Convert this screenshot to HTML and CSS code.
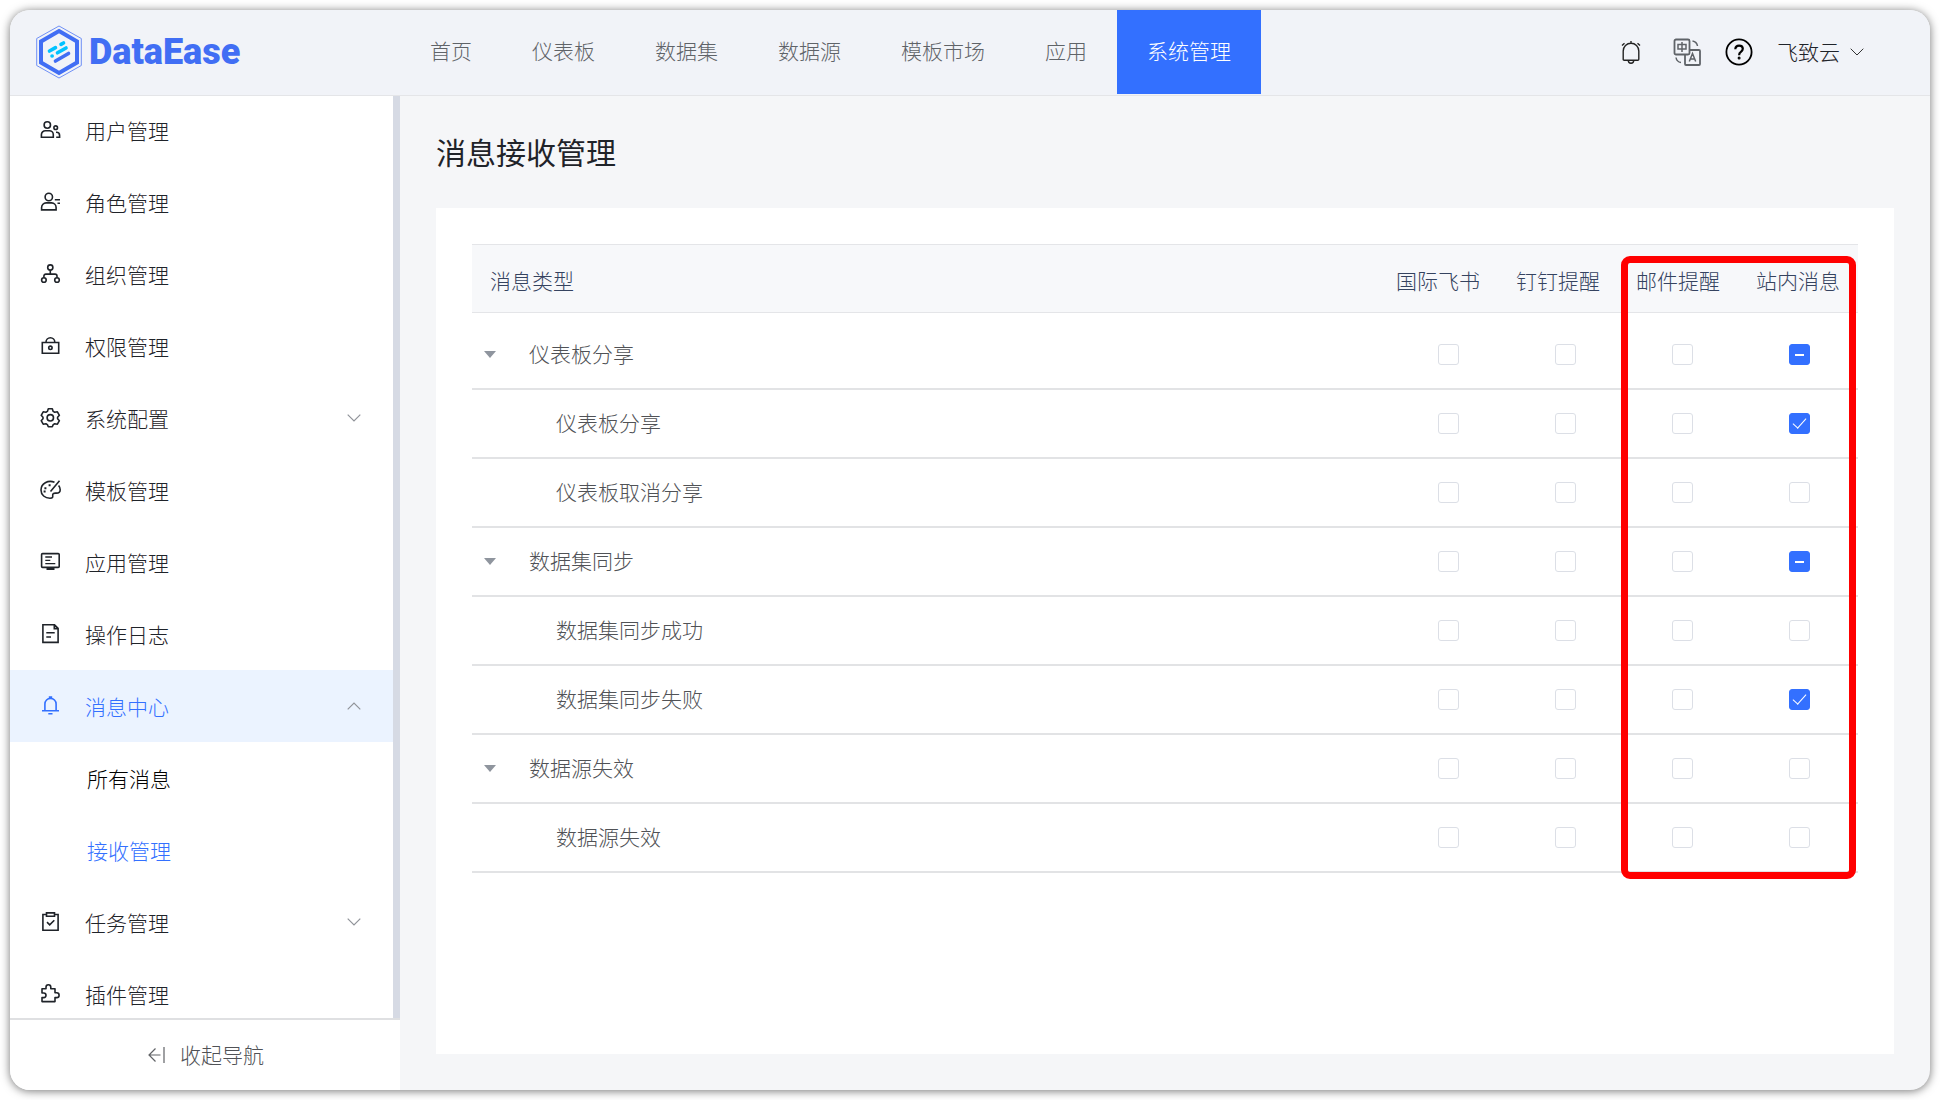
FILE: index.html
```html
<!DOCTYPE html>
<html lang="zh">
<head>
  <meta charset="UTF-8">
  <meta name="viewport" content="width=device-width, initial-scale=1.0">
  <title>DataEase</title>
  <link rel="stylesheet" href="styles.css">
</head>
<body>
  <div class="app">
    <header class="header">
      <a class="logo" href="#">
        <svg width="46" height="54" viewBox="0 0 46 54" fill="none">
          <path d="M23 1 45.300 13.500v27L23 53 .7 40.500v-27z" stroke="#6f8ff5" stroke-width="1"/>
          <path d="M23 6 41 16.400v21.200L23 48 5 37.600V16.400z" stroke="#416ef4" stroke-width="4"/>
          <g stroke-linecap="round" stroke-width="3.600">
            <path d="m13.500 26 6-3.400M25 19.400l2.500-1.400M21.500 27.800l8.500-4.800M16 31h.2" stroke="#00c2ff"/>
            <path d="m19.500 36 13-7.500" stroke="#416ef4"/>
          </g>
        </svg>
        <span class="logo-text">DataEase</span>
      </a>
      <nav class="top-nav">
        <a href="#">首页</a>
        <a href="#">仪表板</a>
        <a href="#">数据集</a>
        <a href="#">数据源</a>
        <a href="#">模板市场</a>
        <a href="#">应用</a>
        <a href="#" class="active">系统管理</a>
      </nav>
      <div class="tools">
        <button class="tool-btn notice" aria-label="消息">
          <svg width="20" height="24" viewBox="0 0 20 24" fill="none" stroke="#222" stroke-width="1.400">
            <path d="M2.200 19.200V11a7.800 7.800 0 0 1 15.600 0v8.200q0 1-1 1H3.200q-1 0-1-1zM7.300 20.500a2.700 2.700 0 0 0 5.400 0M10 1v2.500M1 5.500l2.500-2.200M19 5.500l-2.500-2.200"/>
          </svg>
        </button>
        <button class="tool-btn lang" aria-label="语言">
          <svg width="28" height="28" viewBox="0 0 28 28" fill="none" stroke="#5f6368" stroke-width="1.800">
            <rect x="1.500" y="1.500" width="15" height="15" rx="1.500"/>
            <path d="M16.500 12h9.500a1 1 0 0 1 1 1v13a1 1 0 0 1-1 1H13a1 1 0 0 1-1-1v-9.500"/>
            <path d="M5 6.500h8v4.500H5zM9 4v10M16.300 23.500 19.500 15.500l3.200 8M17.300 21h4.400M19.500 3a6 6 0 0 1 5 5M3 19.500a6 6 0 0 0 5 5" stroke-width="1.500"/>
          </svg>
        </button>
        <button class="tool-btn help" aria-label="帮助">
          <svg width="28" height="28" viewBox="0 0 28 28" fill="none" stroke="#000" stroke-width="1.800">
            <circle cx="14" cy="14" r="12.600"/>
            <path d="M10.300 11.200q.2-3.600 3.800-3.600 3.700 0 3.700 3.200 0 1.700-1.900 3-1.800 1.200-1.800 3.400" stroke-width="2.200"/>
            <circle cx="14.100" cy="20" r=".6"/>
          </svg>
        </button>
        <button class="user">
          <span class="label">飞致云</span>
          <svg width="14" height="8" viewBox="0 0 14 8" fill="none" stroke="#333" stroke-width="1"><path d="m.7.700 6.300 6.300L13.300.7"/></svg>
        </button>
      </div>
    </header>

    <div class="body">
      <aside class="sidebar">
        <nav class="menu">
          <ul>
            <li><a href="#">
              <svg class="icon" viewBox="0 0 22 22"><circle cx="8.300" cy="6" r="3.200"/><path d="M2.400 18.300v-2.600a4 4 0 0 1 4-4h3.900a4 4 0 0 1 4 4v2.600z"/><circle cx="16.700" cy="8.700" r="1.800"/><path d="M17 13.200h.4a3.200 3.200 0 0 1 3.200 3.200v1.900h-3.400"/></svg>
              用户管理</a></li>
            <li><a href="#">
              <svg class="icon" viewBox="0 0 22 22"><circle cx="9.800" cy="6" r="3.700"/><path d="M2.600 18.900v-2.500a4.500 4.500 0 0 1 4.500-4.500h5.500a4.500 4.500 0 0 1 4.500 4.500v2.500zM15.800 8.700H21M18.500 12.200H21"/></svg>
              角色管理</a></li>
            <li><a href="#">
              <svg class="icon" viewBox="0 0 22 22"><circle cx="11.300" cy="4.500" r="2.600"/><circle cx="4.900" cy="17" r="2.300"/><circle cx="18" cy="17" r="2.300"/><path d="M11.300 7.200v4M4.900 14.600v-1.500a2 2 0 0 1 2-2H16a2 2 0 0 1 2 2v1.500"/></svg>
              组织管理</a></li>
            <li><a href="#">
              <svg class="icon" viewBox="0 0 22 22"><path d="M3.300 7.500h16.400v10.700H3.300zM7 7.200a4.400 4.400 0 0 1 8.800 0"/><circle cx="11.400" cy="12.800" r="1.700"/></svg>
              权限管理</a></li>
            <li><a href="#">
              <svg class="icon" viewBox="0 0 22 22"><path d="M9.300 1.800h4l.9 2.600 1.500.9 2.700-.5 2 3.500-1.800 2v1.400l1.800 2-2 3.500-2.700-.5-1.500.9-.9 2.200h-4l-.9-2.200-1.500-.9-2.700.5-2-3.500 1.800-2v-1.400l-1.800-2 2-3.500 2.700.5 1.500-.9z" stroke-linejoin="round"/><circle cx="11.300" cy="10.800" r="3.200"/></svg>
              系统配置
              <svg class="arrow" viewBox="0 0 14 8"><path d="m.7.700 6.300 6.300L13.300.7"/></svg></a></li>
            <li><a href="#">
              <svg class="icon" viewBox="0 0 22 22"><path d="M15.500 3.200C9 .7 2 4.500 2 11c0 5 4 8.300 9 8.300 2.800 0 2.900-1 2.700-2.700-.2-2 .8-2.600 3.300-2.500 2.900.1 4.200-1 4.200-3.400 0-1.500-.6-3-1.600-4.200M20.500 1.800 11.500 12.500"/><path d="M5.400 9.200h2M9.600 6.300h2M4.600 12.500h2" stroke-width="2"/></svg>
              模板管理</a></li>
            <li><a href="#">
              <svg class="icon" viewBox="0 0 22 22"><rect x="2.600" y="2.600" width="17.600" height="13.800" rx="1"/><path d="M6.300 6h6.700M6.300 9.300h5M6.300 12.600h10" stroke-width="1.300"/><path d="M8.300 17h6.400v1.200H8.300z"/></svg>
              应用管理</a></li>
            <li><a href="#">
              <svg class="icon" viewBox="0 0 22 22"><path d="M3.900 1.800h11.600l3.600 3.600v14H3.900zM15.300 1.800v3.800h3.800M7.300 9.800h8.400M7.300 14H12"/></svg>
              操作日志</a></li>
            <li class="open"><a href="#">
              <svg class="icon" viewBox="0 0 22 22"><path d="M5.900 15.500V9a5.600 5.600 0 0 1 11.200 0v6.500M3 15.800h17M9.300 18.800h4.200M9.800 2h3.400"/></svg>
              消息中心
              <svg class="arrow" viewBox="0 0 14 8"><path d="M.7 7.300 7 1l6.300 6.300"/></svg></a>
              <ul class="submenu">
                <li><a href="#">所有消息</a></li>
                <li><a href="#" class="current">接收管理</a></li>
              </ul>
            </li>
            <li><a href="#">
              <svg class="icon" viewBox="0 0 22 22"><path d="M7.500 3.500H3.900v15.700h15.200V3.500h-3.600M7.500 1.900h8v3.400h-8zM8 11.200l2.700 2.600 4.600-4.500"/></svg>
              任务管理
              <svg class="arrow" viewBox="0 0 14 8"><path d="m.7.700 6.300 6.300L13.300.7"/></svg></a></li>
            <li><a href="#">
              <svg class="icon" viewBox="0 0 22 22"><path d="M3 5.800h4V4.200a2.400 2.400 0 0 1 4.800 0v1.600H16v4h1.700a2.400 2.400 0 0 1 0 4.800H16v4H3v-4h1.700a2.200 2.200 0 0 0 0-4.600H3z" stroke-linejoin="round"/></svg>
              插件管理</a></li>
          </ul>
        </nav>
        <button class="collapse">
          <svg width="18" height="16" viewBox="0 0 18 16" fill="none" stroke="#606266" stroke-width="1.200"><path d="M7.500 1.500 1 8l6.500 6.500M1 8h11.500M16 0v16"/></svg>
          <span class="label">收起导航</span>
        </button>
      </aside>

      <main class="main">
        <h1 class="page-title">消息接收管理</h1>
        <section class="card">
          <div class="table-box">
            <table class="msg-table">
              <thead>
                <tr>
                  <th>消息类型</th>
                  <th>国际飞书</th>
                  <th>钉钉提醒</th>
                  <th>邮件提醒</th>
                  <th>站内消息</th>
                </tr>
              </thead>
              <tbody id="msgBody"></tbody>
            </table>
            <div class="highlight"></div>
          </div>
        </section>
      </main>
    </div>
  </div>

  <script>
    const channels = ["国际飞书", "钉钉提醒", "邮件提醒", "站内消息"];

    // 每行四个渠道：0 未选，1 选中，2 半选
    const rows = [
      {"name": "仪表板分享", "parent": true, "state": [0, 0, 0, 2]},
      {"name": "仪表板分享", "state": [0, 0, 0, 1]},
      {"name": "仪表板取消分享", "state": [0, 0, 0, 0]},
      {"name": "数据集同步", "parent": true, "state": [0, 0, 0, 2]},
      {"name": "数据集同步成功", "state": [0, 0, 0, 0]},
      {"name": "数据集同步失败", "state": [0, 0, 0, 1]},
      {"name": "数据源失效", "parent": true, "state": [0, 0, 0, 0]},
      {"name": "数据源失效", "state": [0, 0, 0, 0]}
    ];

    const body = document.getElementById("msgBody");

    rows.forEach(row => {
      const tr = document.createElement("tr");
      const name = document.createElement("td");
      name.className = row.parent ? "name parent" : "name child";
      if (row.parent) {
        const toggle = document.createElement("button");
        toggle.className = "toggle";
        toggle.setAttribute("aria-label", "收起" + row.name);
        name.appendChild(toggle);
      }
      const label = document.createElement("span");
      label.className = "label";
      label.innerText = row.name;
      name.appendChild(label);
      tr.appendChild(name);

      row.state.forEach((state, i) => {
        const td = document.createElement("td");
        const box = document.createElement("input");
        box.type = "checkbox";
        box.className = "checkbox";
        box.checked = state === 1;
        box.indeterminate = state === 2;
        box.setAttribute("aria-label", row.name + " " + channels[i]);
        td.appendChild(box);
        tr.appendChild(td);
      });
      body.appendChild(tr);
    });
  </script>
</body>
</html>
```
FILE: styles.css
```css
:root {
  --primary-color: #3370ff;
  --text-color: #1f2329;
  --muted-color: #505256;
  --line-color: #e4e5e8;
}

* {
  box-sizing: border-box;
}

body {
  margin: 0;
  padding: 10px;
  height: 100vh;
  background: #fff;
  color: var(--text-color);
  font-family: "Noto Sans CJK SC", sans-serif;
  font-size: 21px;
  font-weight: 300;
  line-height: 30px;
}

a {
  color: inherit;
  text-decoration: none;
}

button {
  padding: 0;
  border: none;
  background: none;
  color: inherit;
  font: inherit;
  cursor: pointer;
}

svg {
  display: block;
  flex-shrink: 0;
}

ul {
  margin: 0;
  padding: 0;
  list-style: none;
}

/* 与图标并排的文字，中文字形偏低 */
.label {
  padding-bottom: 3px;
}

.app {
  display: flex;
  flex-direction: column;
  height: 100%;
  border-radius: 20px;
  overflow: hidden;
  background: #f5f6f8;
  box-shadow: 0 1px 10px rgba(0, 0, 0, 0.55);
}

/* 顶部导航 */
.header {
  display: flex;
  flex-shrink: 0;
  height: 86px;
  padding-bottom: 1px;
  background: #f1f3f8;
  border-bottom: 1px solid var(--line-color);
}

.logo {
  display: flex;
  align-items: center;
  gap: 7px;
  width: 390px;
  padding: 0 0 1px 26px;
}

.logo-text {
  color: #416ef4;
  font-family: Roboto, sans-serif;
  font-size: 36px;
  font-weight: 900;
}

.top-nav {
  display: flex;
}

.top-nav a {
  padding: 0 30px;
  line-height: 80px;
  color: #5f6368;
  white-space: nowrap;
}

.top-nav .active {
  background: var(--primary-color);
  color: #fff;
}

.tools {
  display: flex;
  align-items: center;
  gap: 24px;
  margin-left: auto;
  padding: 0 66px 0 0;
}

.notice {
  margin-right: 8px;
}

.user {
  display: flex;
  align-items: center;
  gap: 10px;
  white-space: nowrap;
}

/* 侧边栏 */
.body {
  display: flex;
  flex: 1;
  min-height: 0;
}

.sidebar {
  display: flex;
  flex-direction: column;
  flex-shrink: 0;
  width: 390px;
  background: #fff;
}

.menu {
  flex: 1;
  min-height: 0;
  overflow: hidden;
  border-right: 7px solid #d6dae4;
}

.menu > ul {
  margin-top: -2px;
}

.menu a {
  display: flex;
  align-items: center;
  gap: 24px;
  height: 72px;
  padding: 0 32px 0 29px;
}

.icon {
  width: 22px;
  height: 22px;
  fill: none;
  stroke: currentColor;
  stroke-width: 1.6;
}

.arrow {
  width: 14px;
  height: 8px;
  margin-left: auto;
  fill: none;
  stroke: #909399;
  stroke-width: 1.2;
}

.menu .open > a {
  background: #ebf3ff;
  color: var(--primary-color);
}

.menu .submenu a {
  padding-left: 77px;
  color: #000;
}

.menu .submenu .current {
  color: var(--primary-color);
}

.collapse {
  display: flex;
  align-items: center;
  justify-content: center;
  gap: 14px;
  height: 72px;
  padding-left: 2px;
  border-top: 2px solid #dfe0e2;
  color: var(--muted-color);
}

/* 内容区 */
.main {
  display: flex;
  flex-direction: column;
  flex: 1;
  min-width: 0;
  padding: 36px;
}

.page-title {
  margin: 0 0 38px;
  font-size: 30px;
  font-weight: 400;
  line-height: 38px;
}

.card {
  flex: 1;
  padding: 36px;
  background: #fff;
}

.table-box {
  position: relative;
}

/* 表头与表体的列宽不同，各自用 grid 排列 */
.msg-table,
.msg-table thead,
.msg-table tbody {
  display: block;
}

.msg-table tr {
  display: grid;
  align-items: center;
}

.msg-table thead tr {
  grid-template-columns: 1fr repeat(4, 120px);
  height: 69px;
  padding-top: 2px;
  background: #f7f8fa;
  border-top: 1px solid var(--line-color);
  border-bottom: 1px solid var(--line-color);
}

.msg-table tbody {
  padding-top: 8px;
}

.msg-table tbody tr {
  grid-template-columns: 1fr repeat(4, 117px);
  height: 69px;
  border-bottom: 2px solid #e2e3e5;
}

.msg-table th {
  padding: 0 18px;
  color: #35435f;
  font-weight: 300;
  text-align: left;
  white-space: nowrap;
}

.msg-table td {
  display: flex;
  align-items: center;
  justify-content: center;
  padding: 0;
}

.msg-table .name {
  justify-content: flex-start;
  color: var(--muted-color);
}

.msg-table .parent {
  gap: 34px;
  padding-left: 13px;
}

.msg-table .child {
  padding-left: 84px;
}

.toggle {
  border: 6px solid transparent;
  border-top: 7px solid #8f959e;
  border-bottom: none;
}

.msg-table .parent .toggle {
  margin: 0 -1px;
}

.checkbox {
  appearance: none;
  display: grid;
  place-items: center;
  width: 21px;
  height: 21px;
  margin: 0;
  border: 1px solid #dcdfe6;
  border-radius: 3px;
  background: #fff;
  cursor: pointer;
}

.checkbox:checked,
.checkbox:indeterminate {
  border-color: var(--primary-color);
  background: var(--primary-color);
}

.checkbox:checked::before {
  content: "";
  width: 6px;
  height: 12px;
  margin-bottom: 4px;
  border: solid #fff;
  border-width: 0 1px 1px 0;
  transform: rotate(42deg);
}

.checkbox:indeterminate::before {
  content: "";
  width: 9px;
  height: 2px;
  background: #fff;
}

/* 标出邮件提醒和站内消息两列 */
.highlight {
  position: absolute;
  top: 12px;
  right: 2px;
  bottom: -6px;
  width: 235px;
  border: 7px solid #f00;
  border-radius: 9px;
  pointer-events: none;
}
```
